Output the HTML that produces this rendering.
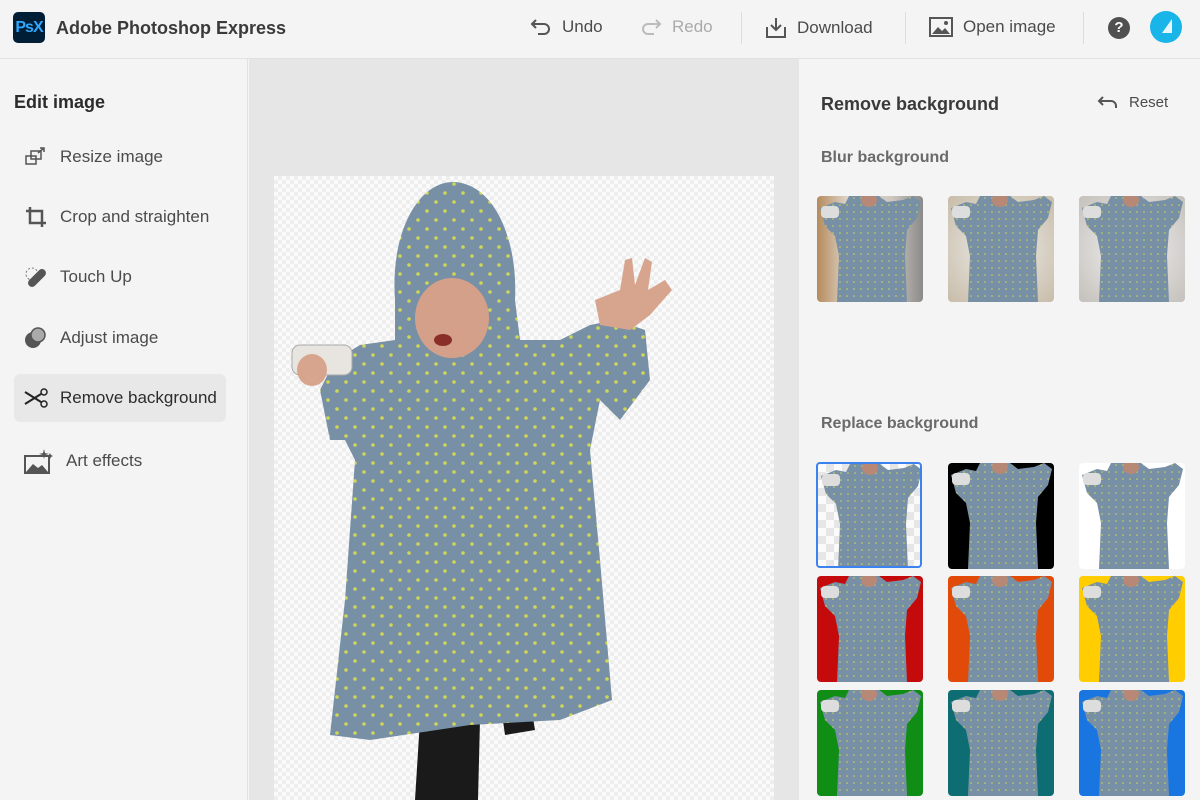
<!DOCTYPE html>
<html><head><meta charset="utf-8"><style>
*{margin:0;padding:0;box-sizing:border-box}
body{width:1200px;height:800px;overflow:hidden;background:#f4f4f4;font-family:"Liberation Sans",sans-serif;color:#4b4b4b;position:relative}
.top{position:absolute;left:0;top:0;width:1200px;height:59px;background:#f4f4f4;border-bottom:1px solid #e1e1e1}
.logo{position:absolute;left:13px;top:12px;width:32px;height:31px;background:#001e36;border-radius:5px;color:#31a8ff;font-weight:bold;font-size:16px;line-height:31px;text-align:center;letter-spacing:-1px}
.title{position:absolute;left:56px;top:18px;font-size:18px;color:#3a3a3a;font-weight:600}
.tb{position:absolute;top:17px;font-size:17px;color:#4b4b4b;display:flex;align-items:center;gap:10px}
.sep{position:absolute;top:12px;width:1px;height:32px;background:#ddd}
.left{position:absolute;left:0;top:59px;width:248px;height:741px;background:#f4f4f4;border-right:1px solid #e1e1e1}
.left h2{position:absolute;left:14px;top:33px;font-size:18px;color:#2c2c2c;font-weight:600}
.item{position:absolute;left:14px;width:212px;height:48px;border-radius:6px;font-size:17px;color:#4b4b4b;display:flex;align-items:center;padding-left:10px;gap:12px}
.item.sel{background:#e8e8e8;color:#2c2c2c}
.canvas{position:absolute;left:249px;top:59px;width:550px;height:741px;background:#e6e6e6}
.chk{position:absolute;left:274px;top:176px;width:500px;height:624px;background-color:#fafafa;background-image:linear-gradient(45deg,#eee 25%,transparent 25%,transparent 75%,#eee 75%),linear-gradient(45deg,#eee 25%,transparent 25%,transparent 75%,#eee 75%);background-size:8px 8px;background-position:0 0,4px 4px}
.right{position:absolute;left:800px;top:59px;width:400px;height:741px;background:#f4f4f4}
.rh{position:absolute;font-size:18px;font-weight:600;color:#3a3a3a}
.sh{position:absolute;font-size:16px;font-weight:600;color:#6a6a6a}
.th{position:absolute;width:106px;height:106px;border-radius:4px;overflow:hidden}
</style></head><body>
<svg width="0" height="0" style="position:absolute"><defs>
<pattern id="dots" width="18" height="18" patternUnits="userSpaceOnUse"><rect width="18" height="18" fill="#7890a6"/><circle cx="4" cy="4" r="1.8" fill="#cfd654"/><circle cx="13" cy="13" r="1.8" fill="#cfd654"/></pattern>
<pattern id="dots2" width="7" height="7" patternUnits="userSpaceOnUse"><rect width="7" height="7" fill="#7890a6"/><circle cx="2" cy="2" r="0.8" fill="#cfd654"/></pattern>
<g id="fig"><polygon points="3,12 18,6 28,8 32,0 62,0 70,6 86,4 96,0 104,6 100,22 90,34 88,60 90,106 20,106 22,60 18,40 8,30" fill="url(#dots2)"/><ellipse cx="52" cy="4" rx="8" ry="7" fill="#b88877"/><rect x="4" y="10" width="18" height="12" rx="4" fill="#ddd"/></g>
</defs></svg>

<div class="top">
<div class="logo">PsX</div>
<div class="title">Adobe Photoshop Express</div>
<div class="tb" style="left:530px"><svg width="22" height="20" viewBox="0 0 22 20"><path d="M6 3 L2 7 L6 11 M2 7 H14 a5 5 0 0 1 0 10 H8" fill="none" stroke="#555" stroke-width="2"/></svg>Undo</div>
<div class="tb" style="left:640px;color:#aaa"><svg width="22" height="20" viewBox="0 0 22 20"><path d="M16 3 L20 7 L16 11 M20 7 H8 a5 5 0 0 0 0 10 H14" fill="none" stroke="#bbb" stroke-width="2"/></svg>Redo</div>
<div class="sep" style="left:741px"></div>
<div class="tb" style="left:765px"><svg width="22" height="22" viewBox="0 0 22 22"><path d="M11 1 V13 M6 8 L11 13 L16 8 M2 10 V20 H20 V10" fill="none" stroke="#555" stroke-width="2"/></svg>Download</div>
<div class="sep" style="left:905px"></div>
<div class="tb" style="left:929px"><svg width="24" height="20" viewBox="0 0 24 20"><rect x="1" y="1" width="22" height="18" fill="none" stroke="#555" stroke-width="2"/><path d="M3 17 L9 10 L13 14 L16 11 L21 17Z" fill="#555"/><circle cx="17" cy="6" r="2" fill="#555"/></svg>Open image</div>
<div class="sep" style="left:1083px"></div>
<div style="position:absolute;left:1108px;top:17px;width:22px;height:22px;border-radius:50%;background:#505050;color:#fff;font-weight:bold;font-size:15px;text-align:center;line-height:22px">?</div>
<div style="position:absolute;left:1150px;top:11px;width:32px;height:32px;border-radius:50%;background:#19b5e8;overflow:hidden"><div style="position:absolute;left:12px;top:8px;width:0;height:0;border-left:10px solid transparent;border-bottom:14px solid #e8f6fc"></div></div>
</div>

<div class="left">
<h2>Edit image</h2>
<div class="item" style="top:74px"><svg width="24" height="20" viewBox="0 0 24 20"><rect x="2" y="9" width="10" height="8" fill="none" stroke="#555" stroke-width="1.5"/><rect x="7" y="4" width="10" height="8" fill="none" stroke="#555" stroke-width="1.5"/><path d="M14 6 L20 1 M16 1 H20 V5" fill="none" stroke="#555" stroke-width="1.5"/></svg>Resize image</div>
<div class="item" style="top:134px"><svg width="24" height="22" viewBox="0 0 24 22"><path d="M6 1 V17 H22 M2 5 H18 V21" fill="none" stroke="#555" stroke-width="2.5"/></svg>Crop and straighten</div>
<div class="item" style="top:194px"><svg width="24" height="22" viewBox="0 0 24 22"><circle cx="8" cy="8" r="6" fill="none" stroke="#777" stroke-dasharray="2 2"/><rect x="2" y="8" width="22" height="8" rx="4" transform="rotate(-45 13 12)" fill="#555"/></svg>Touch Up</div>
<div class="item" style="top:255px"><svg width="24" height="22" viewBox="0 0 24 22"><circle cx="9" cy="13" r="8" fill="#555"/><circle cx="14" cy="8" r="7" fill="#aaa" stroke="#555" stroke-width="1.5"/></svg>Adjust image</div>
<div class="item sel" style="top:315px"><svg width="24" height="20" viewBox="0 0 24 20"><path d="M1 4 L17 14 M1 16 L17 6" stroke="#222" stroke-width="2"/><circle cx="20" cy="4" r="3" fill="none" stroke="#222" stroke-width="1.5"/><circle cx="20" cy="16" r="3" fill="none" stroke="#222" stroke-width="1.5"/></svg>Remove background</div>
<div class="item" style="top:378px"><svg width="30" height="26" viewBox="0 0 30 26"><rect x="1" y="8" width="24" height="17" fill="none" stroke="#555" stroke-width="2"/><path d="M2 24 L9 16 L14 20 L18 17 L24 24Z" fill="#555"/><path d="M20 1 L21 5 L25 6 L21 7 L20 11 L19 7 L15 6 L19 5Z M26 5 L27 7 L29 8 L27 9 L26 11 L25 9 L23 8 L25 7Z" fill="#555"/></svg>Art effects</div>
</div>

<div class="canvas"></div>
<div class="chk"></div>
<svg style="position:absolute;left:0;top:0" width="1200" height="800">
<path d="M420 720 L480 720 L478 800 L415 800Z" fill="#1a1a1a"/>
<path d="M500 700 L530 700 L535 730 L505 735Z" fill="#1a1a1a"/>
<path d="M395 300 C390 230 420 180 455 182 C495 185 518 240 515 300 L520 340 L560 340 L590 325 L615 320 L645 330 L650 380 L620 420 L600 400 L590 450 L600 560 L612 700 L560 720 L470 725 L370 740 L330 735 L345 600 L355 460 L345 440 L330 440 L320 390 L335 360 L360 345 L395 340Z" fill="url(#dots)"/>
<ellipse cx="452" cy="318" rx="37" ry="40" fill="#d4a08a"/>
<ellipse cx="443" cy="340" rx="9" ry="6" fill="#8a2e2a"/>
<path d="M405 300 C402 262 430 252 455 252 C485 252 505 262 502 300 C496 278 482 272 455 272 C428 272 410 282 405 300Z" fill="url(#dots)"/>
<path d="M595 300 L620 290 L625 260 L632 258 L635 285 L645 258 L652 262 L648 290 L665 280 L672 290 L650 315 L630 330 L600 325Z" fill="#d7a58e"/>
<rect x="292" y="345" width="60" height="30" rx="8" fill="#e8e4e0" stroke="#aaa"/>
<ellipse cx="312" cy="370" rx="15" ry="16" fill="#d7a58e"/>
</svg>

<div class="right">
<div class="rh" style="left:21px;top:35px">Remove background</div>
<div style="position:absolute;left:297px;top:35px;font-size:15px;color:#4b4b4b;display:flex;gap:10px;align-items:center"><svg width="22" height="16" viewBox="0 0 22 16"><path d="M6 2 L2 6 L6 10 M2 6 H14 a5 5 0 0 1 5 5 V13" fill="none" stroke="#555" stroke-width="2"/></svg>Reset</div>
<div class="sh" style="left:21px;top:90px">Blur background</div>
<div class="sh" style="left:21px;top:356px">Replace background</div>
</div>

<div class="th" style="left:817px;top:196px;background:linear-gradient(90deg,#b58a5c,#e0d8cc 30%,#cfc8c0 70%,#8a8a8a)"><svg width="106" height="106"><use href="#fig"/></svg></div>
<div class="th" style="left:948px;top:196px;background:radial-gradient(#eee,#c8bca8)"><svg width="106" height="106"><use href="#fig"/></svg></div>
<div class="th" style="left:1079px;top:196px;background:radial-gradient(#f2f2f2,#c4c0bb)"><svg width="106" height="106"><use href="#fig"/></svg></div>

<div class="th" style="left:816px;top:462px;border:2px solid #3b82f0;background-color:#fafafa;background-image:linear-gradient(45deg,#e6e6e6 25%,transparent 25%,transparent 75%,#e6e6e6 75%),linear-gradient(45deg,#e6e6e6 25%,transparent 25%,transparent 75%,#e6e6e6 75%);background-size:16px 16px;background-position:0 0,8px 8px"><svg width="106" height="106"><use href="#fig"/></svg></div>
<div class="th" style="left:948px;top:463px;background:#000"><svg width="106" height="106"><use href="#fig"/></svg></div>
<div class="th" style="left:1079px;top:463px;background:#fff"><svg width="106" height="106"><use href="#fig"/></svg></div>
<div class="th" style="left:817px;top:576px;background:#c40a0a"><svg width="106" height="106"><use href="#fig"/></svg></div>
<div class="th" style="left:948px;top:576px;background:#e14a09"><svg width="106" height="106"><use href="#fig"/></svg></div>
<div class="th" style="left:1079px;top:576px;background:#ffcd00"><svg width="106" height="106"><use href="#fig"/></svg></div>
<div class="th" style="left:817px;top:690px;background:#0f8d14"><svg width="106" height="106"><use href="#fig"/></svg></div>
<div class="th" style="left:948px;top:690px;background:#0d6d72"><svg width="106" height="106"><use href="#fig"/></svg></div>
<div class="th" style="left:1079px;top:690px;background:#1976e0"><svg width="106" height="106"><use href="#fig"/></svg></div>
</body></html>
